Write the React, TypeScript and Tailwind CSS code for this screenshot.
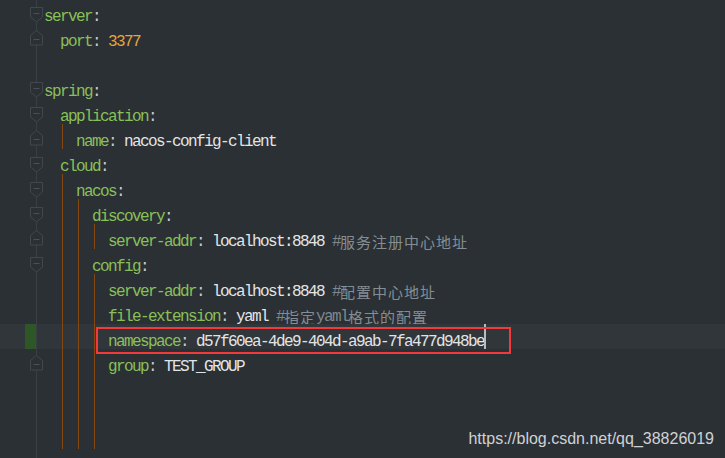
type Tok = [string, string];

const K = "text-[#88c05a]";
const C = "text-[#c5cacd]";
const V = "text-[#e2e5e7]";
const N = "text-[#e6a43a]";
const CM = "text-[#7e888e]";
const CJK = "CJK";

type Line = {
  lvl: number;
  toks: Tok[];
  guides: number[];
  fold?: "down" | "up";
  hl?: boolean;
};

const kv = (k: string, v: string, vc = V): Tok[] => [
  [k, K],
  [": ", C],
  [v, vc],
];

const lines: Line[] = [
  { lvl: 0, toks: [["server", K], [":", C]], guides: [], fold: "down" },
  { lvl: 1, toks: kv("port", "3377", N), guides: [], fold: "up" },
  { lvl: 0, toks: [], guides: [] },
  { lvl: 0, toks: [["spring", K], [":", C]], guides: [], fold: "down" },
  { lvl: 1, toks: [["application", K], [":", C]], guides: [], fold: "down" },
  { lvl: 2, toks: kv("name", "nacos-config-client"), guides: [1], fold: "up" },
  { lvl: 1, toks: [["cloud", K], [":", C]], guides: [], fold: "down" },
  { lvl: 2, toks: [["nacos", K], [":", C]], guides: [1], fold: "down" },
  { lvl: 3, toks: [["discovery", K], [":", C]], guides: [1, 2], fold: "down" },
  {
    lvl: 4,
    toks: [...kv("server-addr", "localhost:8848 "), ["#", CM], ["服务注册中心地址", CJK]],
    guides: [1, 2, 3],
    fold: "up",
  },
  { lvl: 3, toks: [["config", K], [":", C]], guides: [1, 2], fold: "down" },
  {
    lvl: 4,
    toks: [...kv("server-addr", "localhost:8848 "), ["#", CM], ["配置中心地址", CJK]],
    guides: [1, 2, 3],
  },
  {
    lvl: 4,
    toks: [
      ...kv("file-extension", "yaml "),
      ["#", CM],
      ["指定", CJK],
      ["yaml", CM],
      ["格式的配置", CJK],
    ],
    guides: [1, 2, 3],
  },
  {
    lvl: 4,
    toks: kv("namespace", "d57f60ea-4de9-404d-a9ab-7fa477d948be"),
    guides: [1, 2, 3],
    hl: true,
  },
  { lvl: 4, toks: kv("group", "TEST_GROUP"), guides: [1, 2, 3], fold: "up" },
  { lvl: 4, toks: [], guides: [1, 2, 3] },
  { lvl: 4, toks: [], guides: [1, 2, 3] },
  { lvl: 4, toks: [], guides: [1, 2, 3] },
  { lvl: 0, toks: [], guides: [] },
];

function FoldIcon({ dir }: { dir: "down" | "up" }) {
  if (dir === "down") {
    return (
      <svg
        width="14"
        height="16"
        viewBox="0 0 14 16"
        className="absolute left-[30px] top-[8px]"
      >
        <path
          d="M0.5 0.5H12.5V10L6.5 15L0.5 10Z"
          fill="#2b3034"
          stroke="#41474c"
          strokeWidth="1"
        />
        <path d="M3.5 6.5H9.5" stroke="#4a5156" strokeWidth="1" />
      </svg>
    );
  }
  return (
    <svg
      width="14"
      height="16"
      viewBox="0 0 14 16"
      className="absolute left-[30px] top-[6px]"
    >
      <path
        d="M6.5 0.5L12.5 5.5V15H0.5V5.5Z"
        fill="#2b3034"
        stroke="#41474c"
        strokeWidth="1"
      />
      <path d="M3.5 9.5H9.5" stroke="#4a5156" strokeWidth="1" />
    </svg>
  );
}

function Row({ line }: { line: Line }) {
  const cells = Math.max(line.lvl, line.guides.length ? Math.max(...line.guides) + 1 : 0);
  return (
    <div className={`relative flex h-[25px] ${line.hl ? "bg-[#31363a]" : ""}`}>
      <div className="relative h-full w-[44px] shrink-0">
        <div className="absolute bottom-0 left-[36px] top-0 w-px bg-[#394045]" />
        {line.hl && <div className="absolute bottom-0 left-[25px] top-0 w-[11px] bg-[#2e5626]" />}
        {line.fold && <FoldIcon dir={line.fold} />}
      </div>
      {Array.from({ length: cells }).map((_, i) => (
        <div key={i} className="h-full w-4 shrink-0">
          {line.guides.includes(i) && <div className="ml-[2px] h-full w-px bg-[#85470f]" />}
        </div>
      ))}
      <div className="flex h-full items-center whitespace-pre pt-[11px]">
        {line.toks.map(([t, cls], i) =>
          cls === CJK ? (
            <span
              key={i}
              className="font-['Noto_Sans_CJK_SC',sans-serif] text-[15px] tracking-[1px] text-[#848d93]"
            >
              {t}
            </span>
          ) : (
            <span key={i} className={cls}>
              {t}
            </span>
          )
        )}
      </div>
      {line.hl && (
        <>
          <div className="h-full w-[2px] bg-[#b8bcbf]" />
          <div className="absolute left-[96px] top-[3px] h-[27px] w-[415px] border-2 border-[#f23a3a]" />
        </>
      )}
    </div>
  );
}

export default function App() {
  return (
    <div className="relative h-[458px] w-[725px] overflow-hidden bg-[#2b3034] font-['Liberation_Mono',monospace] text-[16px] tracking-[-1.6px]">
      <div className="-mt-px">
        {lines.map((l, i) => (
          <Row key={i} line={l} />
        ))}
      </div>
      <div className="absolute bottom-[7px] right-[11px] font-['Liberation_Sans',Arial,sans-serif] text-[16px] tracking-normal text-[#cfd2d4]">
        https://blog.csdn.net/qq_38826019
      </div>
    </div>
  );
}
